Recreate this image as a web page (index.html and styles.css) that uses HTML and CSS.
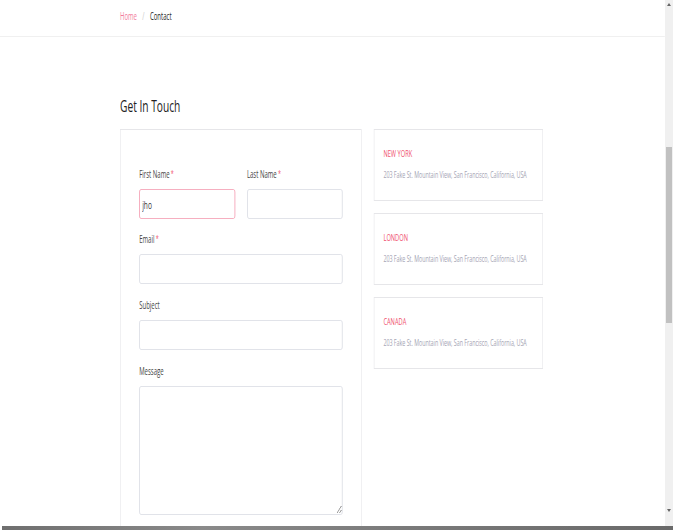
FILE: index.html
```html
<!DOCTYPE html>
<html lang="en">
<head>
    <meta charset="UTF-8">
    <meta name="viewport" content="width=device-width, initial-scale=1.0">
    <title>Contact</title>
    <link rel="stylesheet" href="styles.css">
</head>
<body>
    <div class="page">
        <header class="topbar">
            <nav class="breadcrumb">
                <a href="#" class="crumb-link">Home</a>
                <span class="crumb-sep">/</span>
                <span class="crumb-current">Contact</span>
            </nav>
        </header>

        <main class="contact">
            <h2 class="contact-title">Get In Touch</h2>
            <div class="contact-grid">
                <form class="contact-form">
                    <div class="form-row">
                        <div class="form-group">
                            <label class="form-label">First Name<span class="req">*</span></label>
                            <input type="text" class="form-input is-focused" value="jho">
                        </div>
                        <div class="form-group">
                            <label class="form-label">Last Name<span class="req">*</span></label>
                            <input type="text" class="form-input">
                        </div>
                    </div>
                    <div class="form-group">
                        <label class="form-label">Email<span class="req">*</span></label>
                        <input type="email" class="form-input">
                    </div>
                    <div class="form-group">
                        <label class="form-label">Subject</label>
                        <input type="text" class="form-input">
                    </div>
                    <div class="form-group">
                        <label class="form-label">Message</label>
                        <textarea class="form-input form-textarea"></textarea>
                    </div>
                </form>

                <aside class="offices">
                    <div class="office">
                        <h3 class="office-name">NEW YORK</h3>
                        <p class="office-address">203 Fake St. Mountain View, San Francisco, California, USA</p>
                    </div>
                    <div class="office">
                        <h3 class="office-name">LONDON</h3>
                        <p class="office-address">203 Fake St. Mountain View, San Francisco, California, USA</p>
                    </div>
                    <div class="office">
                        <h3 class="office-name">CANADA</h3>
                        <p class="office-address">203 Fake St. Mountain View, San Francisco, California, USA</p>
                    </div>
                </aside>
            </div>
        </main>
    </div>

    <div class="scrollbar">
        <span class="scroll-arrow up"></span>
        <span class="scroll-thumb"></span>
        <span class="scroll-arrow down"></span>
    </div>
    <div class="bottom-bar"></div>
</body>
</html>
```

FILE: styles.css
```css
html, body {
    margin: 0;
    height: 100%;
    overflow: hidden;
    background-color: #ffffff;
}
body {
    font-family: 'Open Sans', 'Liberation Sans', sans-serif;
    color: #333;
}
/* the whole page is drawn narrow, like the capture */
.page {
    width: 1108px;
    transform: scaleX(0.6);
    transform-origin: 0 0;
}
.topbar {
    height: 37px;
    box-sizing: border-box;
    border-bottom: 1px solid #f0f0f0;
    padding-top: 9px;
}
.breadcrumb {
    margin-left: 200px;
    display: flex;
    align-items: center;
    gap: 9px;
    font-size: 10px;
    line-height: 14px;
}
.crumb-link {
    color: #f27a9b;
    text-decoration: none;
}
.crumb-sep {
    color: #c8c8c8;
}
.crumb-current {
    color: #222;
}
.contact {
    margin-left: 200px;
    width: 705px;
}
.contact-title {
    font-size: 17px;
    font-weight: 400;
    line-height: 20px;
    color: #222;
    margin: 59px 0 13px;
}
.contact-grid {
    display: flex;
    gap: 20px;
    align-items: flex-start;
}
.contact-form {
    width: 403px;
    box-sizing: border-box;
    border: 1px solid #e6e6e9;
    padding: 38px 31px 40px;
}
.form-row {
    display: flex;
    gap: 20px;
}
.form-row .form-group {
    flex: 1;
    margin-bottom: 14px;
}
.form-group {
    margin-bottom: 15px;
}
.form-label {
    display: block;
    height: 13px;
    font-size: 10px;
    line-height: 13px;
    color: #444;
    margin-bottom: 8px;
}
.req {
    color: #f0506e;
    margin-left: 2px;
    font-size: 9px;
    line-height: 1;
    position: relative;
    top: -1px;
}
.form-input {
    display: block;
    width: 100%;
    box-sizing: border-box;
    height: 30px;
    border: 1px solid #d9dce3;
    border-radius: 3px;
    padding: 0 4px;
    font-family: inherit;
    font-size: 11px;
    color: #333;
    background: #fff;
    outline: none;
}
.form-input.is-focused {
    border-color: #f49ab0;
}
.form-textarea {
    height: 129px;
    resize: vertical;
}
.offices {
    width: 282px;
    display: flex;
    flex-direction: column;
    gap: 12px;
}
.office {
    border: 1px solid #e6e6e9;
    padding: 17px 15px 0;
    height: 72px;
    box-sizing: border-box;
}
.office-name {
    margin: 0 0 8px;
    font-size: 9.5px;
    line-height: 13px;
    font-weight: 400;
    color: #f0506e;
}
.office-address {
    margin: 0;
    font-size: 9px;
    letter-spacing: -0.08px;
    line-height: 13px;
    white-space: nowrap;
    color: #a5a5b4;
}
.scrollbar {
    position: fixed;
    top: 0;
    right: 0;
    width: 8px;
    height: 526px;
    background: #f0f0f0;
}
.scroll-thumb {
    position: absolute;
    top: 147px;
    left: 1px;
    width: 6px;
    height: 176px;
    background: #c1c1c1;
}
.scroll-arrow {
    position: absolute;
    left: 2px;
    width: 0;
    height: 0;
    border-left: 2px solid transparent;
    border-right: 2px solid transparent;
}
.scroll-arrow.up {
    top: 3px;
    border-bottom: 3px solid #666;
}
.scroll-arrow.down {
    bottom: 14px;
    border-top: 3px solid #666;
}
.bottom-bar {
    position: fixed;
    left: 2px;
    right: 0;
    bottom: 0;
    height: 4px;
    background: linear-gradient(90deg, #6f6f6f, #8a8a8a 30%, #7a7a7a 60%, #6a6a6a);
}
```
